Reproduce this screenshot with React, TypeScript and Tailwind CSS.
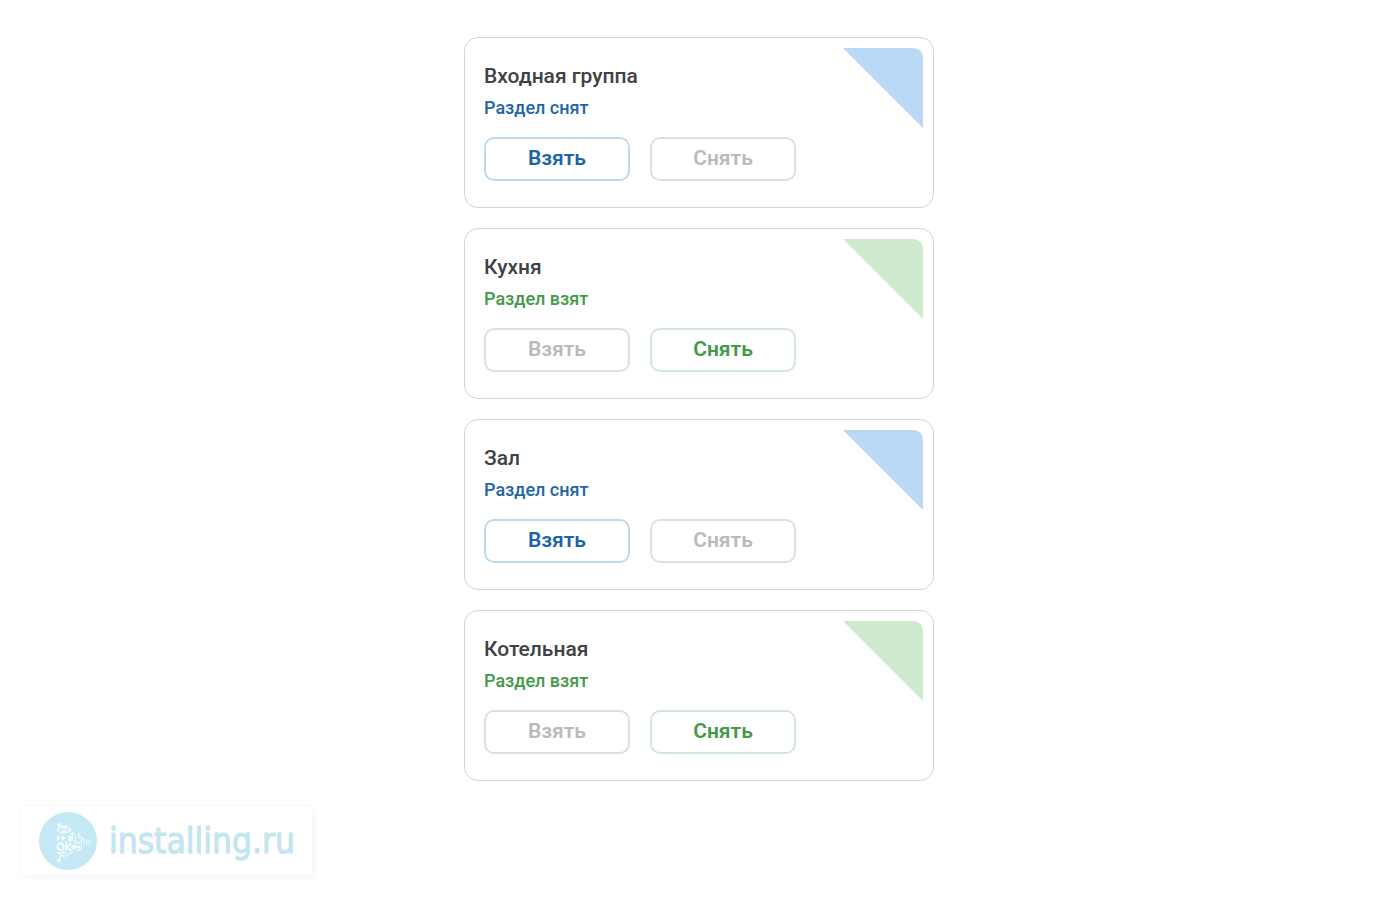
import React, { useState } from 'react';

type Section = { id: number; name: string; armed: boolean };

const initialSections: Section[] = [
  { id: 1, name: 'Входная группа', armed: false },
  { id: 2, name: 'Кухня', armed: true },
  { id: 3, name: 'Зал', armed: false },
  { id: 4, name: 'Котельная', armed: true },
];

const buttonBase = 'h-11 w-[146px] rounded-[10px] border-2 bg-white text-[21px] font-semibold';
const buttonIdle = 'border-[#dfdfdf] text-[#b8bbbc]';

function SectionCard({ section, onChange }: { section: Section; onChange: (armed: boolean) => void }) {
  const { name, armed } = section;

  return (
    <section className="relative rounded-[14px] border border-[#d3d4d6] bg-white px-[19px] pt-6 pb-[26px]">
      <svg className={`absolute top-[10px] right-[10px] size-20 ${armed ? 'text-[#cdeacf]' : 'text-[#bad8f6]'}`} viewBox="0 0 80 80" fill="currentColor" aria-hidden="true">
        <path d="M0 0H69Q80 0 80 11V80Z" />
      </svg>
      <h2 className="text-[21px] leading-7 font-medium text-[#3f4144]">{name}</h2>
      <p className={`mt-1 text-lg leading-7 font-medium ${armed ? 'text-[#429a48]' : 'text-[#1f66a8]'}`}>
        {armed ? 'Раздел взят' : 'Раздел снят'}
      </p>
      <div className="mt-[15px] flex gap-5">
        <button type="button" onClick={() => onChange(true)} className={`${buttonBase} ${armed ? buttonIdle : 'border-[#bdd9ee] text-[#1d63a8]'}`}>
          Взять
        </button>
        <button type="button" onClick={() => onChange(false)} className={`${buttonBase} ${armed ? 'border-[#d3e9d5] text-[#429a48]' : buttonIdle}`}>
          Снять
        </button>
      </div>
    </section>
  );
}

function Logo() {
  return (
    <svg className="size-[58px]" viewBox="0 0 58 58" fill="none" stroke="#f2fbfe" strokeWidth="1.3" aria-hidden="true">
      <circle cx="29" cy="29" r="29" fill="#c5e9f4" stroke="none" />
      {/* eye */}
      <circle cx="20" cy="13" r="2" fill="#f2fbfe" stroke="none" />
      <path d="M18 18Q25 10 32 18Q25 24 18 18Z" />
      <circle cx="25" cy="17.500" r="2" />
      {/* small signs */}
      <path d="M31 22H36M33.500 19.500V24.500" />
      <path d="M18 23L22 26L18 29ZM23 23L27 26L23 29Z" fill="#f2fbfe" stroke="none" />
      <rect x="29" y="24" width="5" height="5" fill="#f2fbfe" stroke="none" />
      <path d="M37 24Q34 30 39 31Q45 31 42 24M40 21V27" />
      <ellipse cx="21.500" cy="34.500" rx="3" ry="3.500" strokeWidth="1.800" />
      <path d="M27 29V39M32 31L28 35L32 39" strokeWidth="1.800" />
      <path d="M35 31L36.200 33.300L39 33.500L37 35.300L37.600 38L35 36.500L32.400 38L33 35.300L31 33.500L33.800 33.300Z" fill="#f2fbfe" stroke="none" />
      <path d="M43 33L38 35L42 36L38 39" />
      <path d="M44 26Q47 30 44 34M47 27Q49 30 47 34M50 28Q52 31 50 33" strokeWidth="1" />
      <path d="M18 41H26L24 39M21 49V43L25 44V46M27 44L35 39" />
      <circle cx="20" cy="48.500" r="1.800" fill="#f2fbfe" stroke="none" />
    </svg>
  );
}

export default function App() {
  const [sections, setSections] = useState(initialSections);

  const setArmed = (id: number, armed: boolean) => {
    setSections(sections.map((s) => (s.id === id ? { ...s, armed } : s)));
  };

  return (
    <div className="flex min-h-screen flex-col bg-white pt-[37px] pr-0.5 font-[Roboto,sans-serif]">
      <main className="mx-auto flex w-full max-w-[470px] flex-col gap-5">
        {sections.map((s) => (
          <SectionCard key={s.id} section={s} onChange={(armed) => setArmed(s.id, armed)} />
        ))}
      </main>

      <footer className="mt-auto mb-6 ml-5 flex h-[71px] w-[293px] items-center gap-3 rounded-sm border border-[#f8f8f8] bg-white pl-[18px] shadow-[4px_4px_0_#fbfbfb]">
        <Logo />
        <span className="font-['DejaVu_Sans_Condensed','DejaVu_Sans',sans-serif] text-[35px] leading-10 text-[#c3e5ef] [-webkit-text-stroke:1px_#c3e5ef]">installing.ru</span>
      </footer>
    </div>
  );
}
